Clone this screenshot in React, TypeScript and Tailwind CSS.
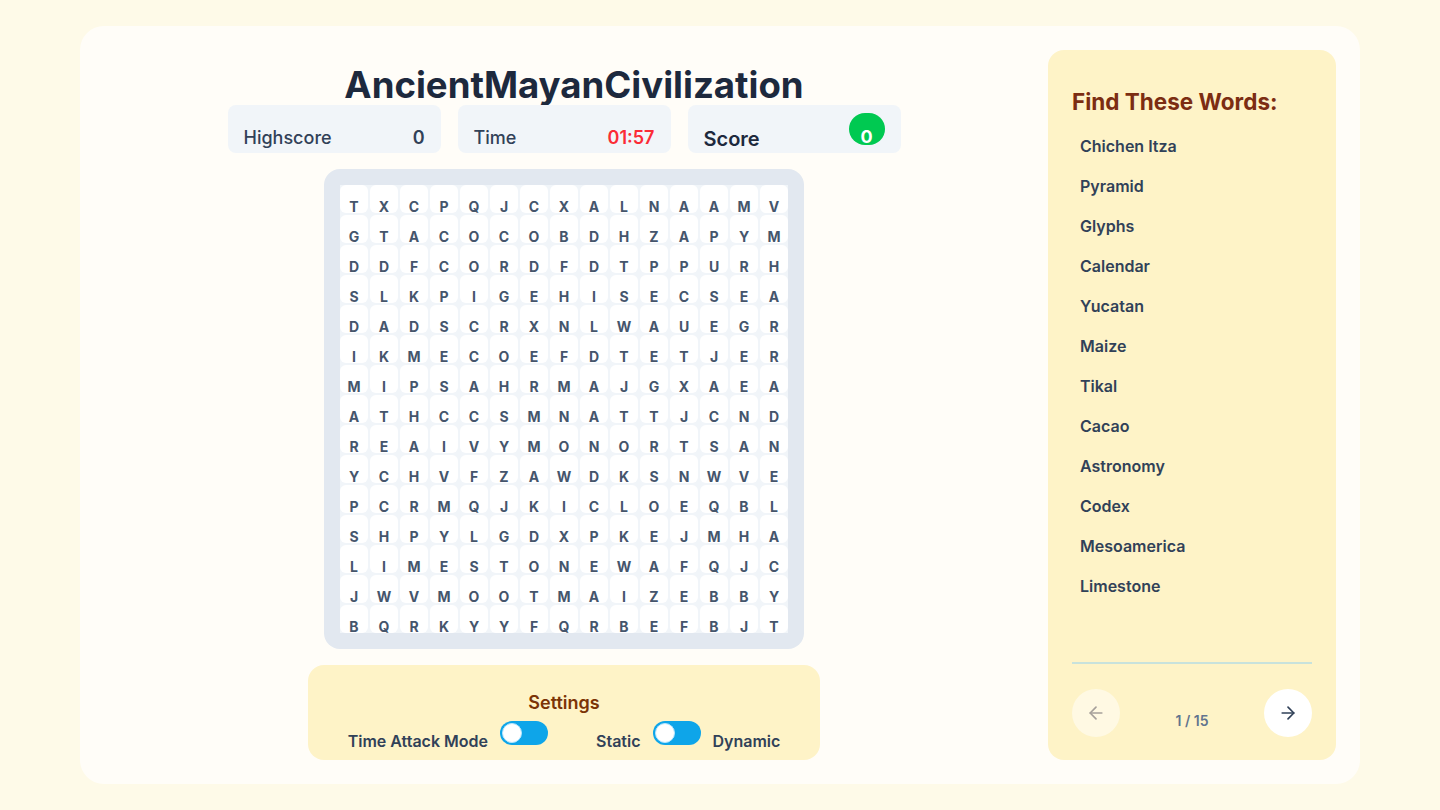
import React, { useState } from 'react';
import { ArrowLeft, ArrowRight } from 'lucide-react';

const rows = [
  'TXCPQJCXALNAAMV',
  'GTACOCOBDHZAPYM',
  'DDFCORDFDTPPURH',
  'SLKPIGEHISECSEA',
  'DADSCRXNLWAUEGR',
  'IKMECOEFDTETJER',
  'MIPSAHRMAJGXAEA',
  'ATHCCSMNATTJCND',
  'REAIVYMONORTSAN',
  'YCHVFZAWDKSNWVE',
  'PCRMQJKICLOEQBL',
  'SHPYLGDXPKEJMHA',
  'LIMESTONEWAFQJC',
  'JWVMOOTMAIZEBBY',
  'BQRKYYFQRBEFBJT',
];

const words = [
  'Chichen Itza',
  'Pyramid',
  'Glyphs',
  'Calendar',
  'Yucatan',
  'Maize',
  'Tikal',
  'Cacao',
  'Astronomy',
  'Codex',
  'Mesoamerica',
  'Limestone',
];

function Toggle({ on, onClick }: { on: boolean; onClick: () => void }) {
  return (
    <button
      onClick={onClick}
      className="relative h-6 w-12 shrink-0 rounded-full bg-[#0ea5e9]"
    >
      <span
        className={
          'absolute top-0.5 h-5 w-5 rounded-full border border-sky-200 bg-white ' +
          (on ? 'left-[26px]' : 'left-0.5')
        }
      />
    </button>
  );
}

export default function App() {
  const [timeAttack, setTimeAttack] = useState(false);
  const [dynamic, setDynamic] = useState(false);

  return (
    <div
      className="min-h-screen bg-[#fefae8] px-20 py-[26px]"
      style={{ fontFamily: 'Inter, "Noto Sans", sans-serif' }}
    >
      <div className="flex h-[758px] gap-6 rounded-3xl bg-[#fffdf8] p-6">
        {/* left: game */}
        <div className="flex flex-1 flex-col items-center pt-[15px]">
          <h1 className="pl-5 text-[36.6px] leading-10 font-bold text-slate-800">
            AncientMayanCivilization
          </h1>

          <div className="flex gap-[17px]">
            <div className="flex h-12 w-[213px] items-center justify-between rounded-lg bg-slate-100 px-4 pt-4">
              <span className="mt-0.5 text-lg font-medium text-slate-700">Highscore</span>
              <span className="mt-0.5 text-lg font-semibold text-slate-700">0</span>
            </div>
            <div className="flex h-12 w-[213px] items-center justify-between rounded-lg bg-slate-100 px-4 pt-4">
              <span className="mt-0.5 text-lg font-medium text-slate-700">Time</span>
              <span className="mt-0.5 text-lg font-semibold text-red-500">01:57</span>
            </div>
            <div className="flex h-12 w-[213px] justify-between rounded-lg bg-slate-100 px-4">
              <span className="mt-5 text-xl leading-7 font-semibold text-slate-800">Score</span>
              <span className="mt-2 flex h-8 w-9 items-end justify-center rounded-full bg-green-500 text-lg leading-[17px] font-bold text-white">
                0
              </span>
            </div>
          </div>

          <div className="mt-4 rounded-2xl bg-slate-200 p-4">
            <div className="grid h-[448px] w-[448px] grid-cols-[repeat(15,28px)] gap-[2px] bg-slate-100">
              {rows.map((row, r) =>
                row.split('').map((ch, c) => (
                  <div
                    key={r + '-' + c}
                    className="h-7 w-7 rounded-md bg-white pt-[15px] text-center text-sm leading-[13px] font-bold text-slate-600"
                  >
                    {ch}
                  </div>
                ))
              )}
            </div>
          </div>

          <div className="mt-4 h-[95px] w-[512px] rounded-2xl bg-[#fef3c7] pt-6">
            <div className="text-center text-lg leading-7 font-semibold text-amber-900">Settings</div>
            <div className="mt-1 flex items-start justify-center">
              <span className="mt-2 text-base leading-6 font-semibold text-slate-700">Time Attack Mode</span>
              <span className="ml-3">
                <Toggle on={timeAttack} onClick={() => setTimeAttack(!timeAttack)} />
              </span>
              <span className="mt-2 ml-[48px] text-base leading-6 font-semibold text-slate-700">Static</span>
              <span className="ml-3">
                <Toggle on={dynamic} onClick={() => setDynamic(!dynamic)} />
              </span>
              <span className="mt-2 ml-3 text-base leading-6 font-semibold text-slate-700">Dynamic</span>
            </div>
          </div>
        </div>

        {/* right: word list */}
        <div className="flex w-[288px] flex-col rounded-2xl bg-[#fef3c7] px-6 pt-9 pb-[23px]">
          <h2 className="text-[22.5px] leading-8 font-bold text-[#7c2d12]">Find These Words:</h2>
          <ul className="mt-2 flex-1">
            {words.map((w) => (
              <li key={w} className="flex h-10 items-center px-2 text-base font-semibold text-slate-700">
                {w}
              </li>
            ))}
          </ul>
          <div className="h-0.5 bg-[#c8e2dc]" />
          <div className="mt-[25px] flex items-center justify-between">
            <button className="flex h-12 w-12 items-center justify-center rounded-full bg-white/50 text-stone-400">
              <ArrowLeft size={20} />
            </button>
            <span className="mt-4 text-sm font-semibold text-slate-500">1 / 15</span>
            <button className="flex h-12 w-12 items-center justify-center rounded-full bg-white text-slate-700">
              <ArrowRight size={20} />
            </button>
          </div>
        </div>
      </div>
    </div>
  );
}
